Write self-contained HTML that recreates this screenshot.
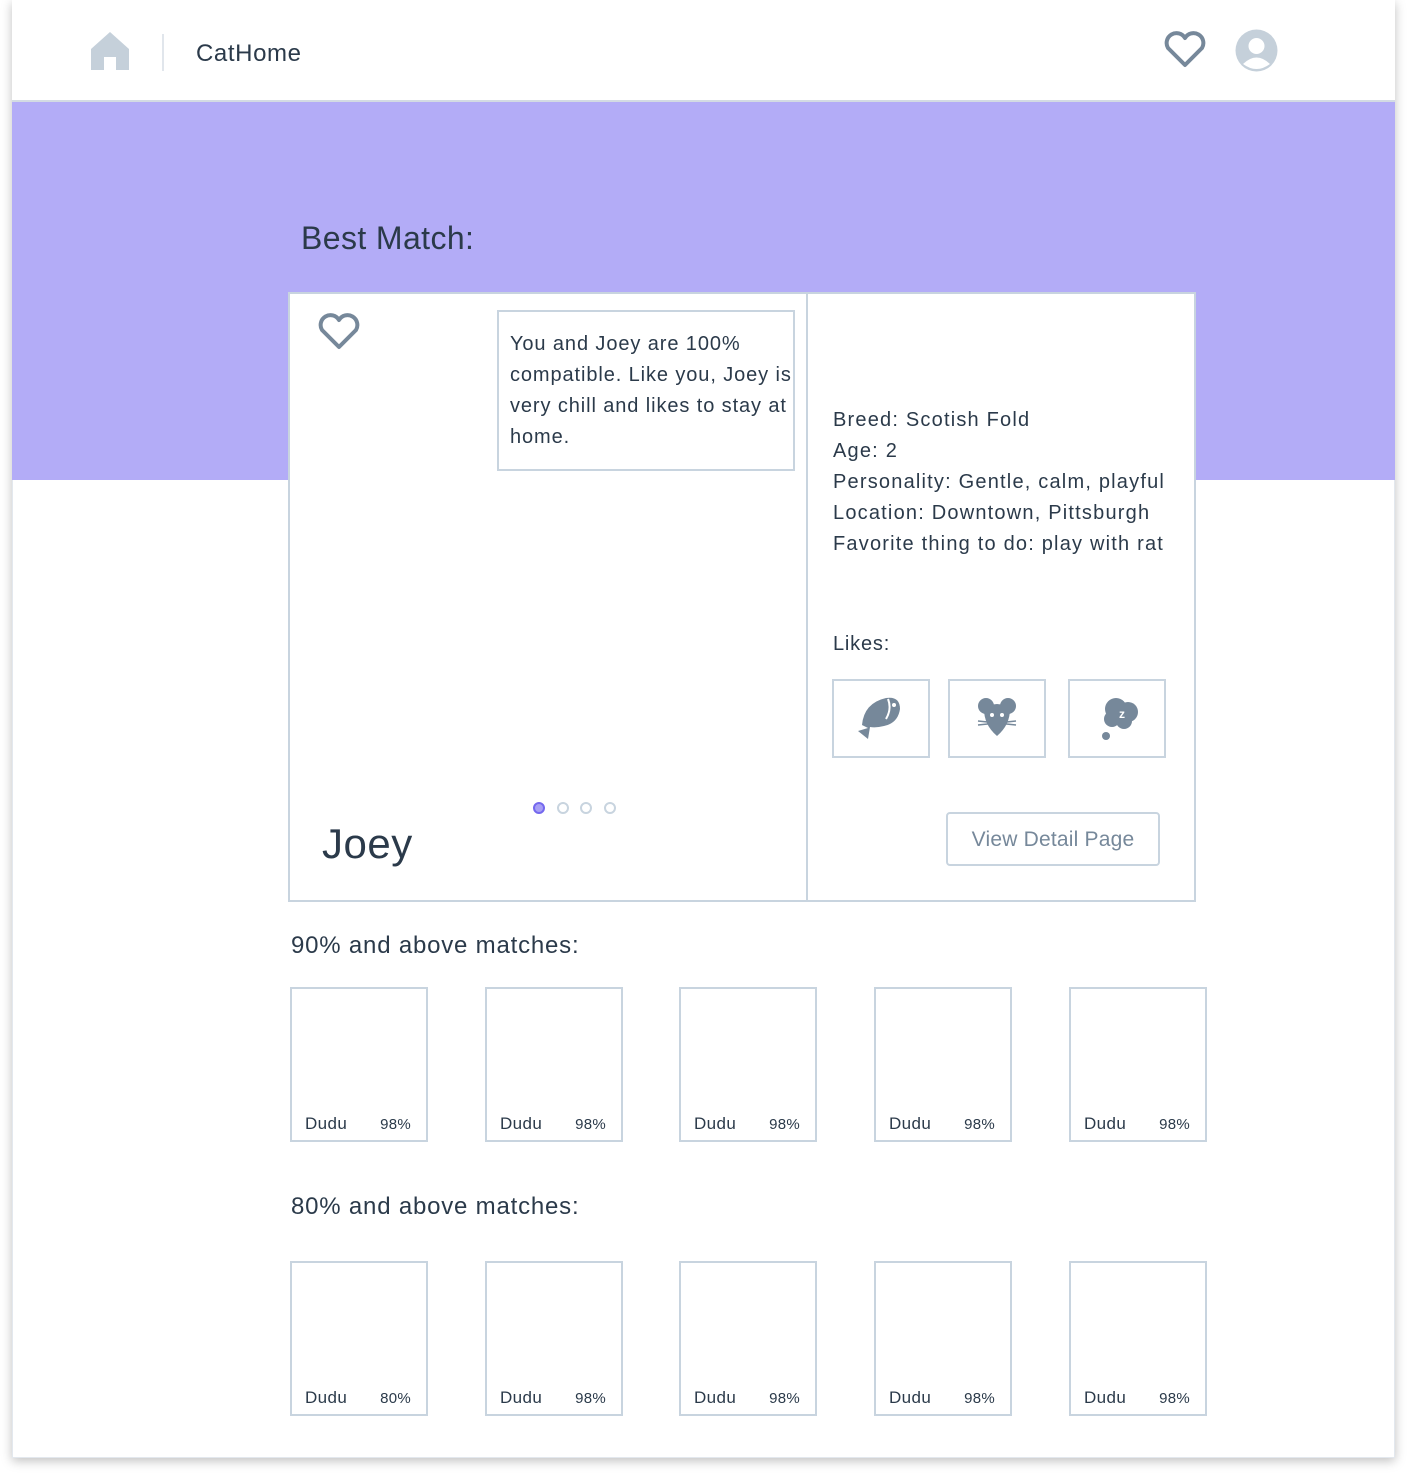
<!DOCTYPE html>
<html><head><meta charset="utf-8">
<style>
*{margin:0;padding:0;box-sizing:border-box}
body{width:1407px;height:1482px;background:#fff;font-family:"Liberation Sans",sans-serif;color:#2b3a4a;position:relative;overflow:hidden}
.frame{position:absolute;left:12px;top:0;width:1383px;height:1458px;background:#fff;box-shadow:0 3px 10px rgba(0,0,0,.25);border:1px solid #e3e8ee}
.abs{position:absolute;white-space:nowrap}
.band{position:absolute;left:12px;top:102px;width:1383px;height:378px;background:#b3acf7}
.hdr{position:absolute;left:12px;top:0;width:1383px;height:102px;background:#fff;border-bottom:2px solid #d3dbe3}
.box{position:absolute;border:2px solid #c8d4df;background:#fff}
.sm{position:absolute;width:138px;height:155px;border:2px solid #c8d4df;background:#fff}
.sm .n{position:absolute;left:13px;bottom:6px;font-size:17px;color:#2b3a4a;letter-spacing:0.4px}
.sm .p{position:absolute;right:15px;bottom:7px;font-size:15px;color:#2b3a4a;letter-spacing:0.3px}
.like{position:absolute;top:679px;width:98px;height:79px;border:2px solid #c8d4df;background:#fff}
.dot{position:absolute;top:802px;width:12px;height:12px;border-radius:50%;border:2px solid #c8d4df}
</style></head><body>
<div class="frame"></div>
<div class="band"></div>
<div class="hdr"></div>
<svg class="abs" style="left:90px;top:31px" width="40" height="40" viewBox="0 0 40 40"><path d="M20 1 L39 18 L39 39 L26 39 L26 26 L14 26 L14 39 L1 39 L1 18 Z" fill="#c5d0da"/></svg>
<div class="abs" style="left:162px;top:34px;width:2px;height:37px;background:#e1e6ec"></div>
<div class="abs" style="left:196px;top:40px;font-size:24px;color:#2b3a4a;letter-spacing:0.6px">CatHome</div>
<svg class="abs" style="left:1163px;top:31px" width="44" height="38" viewBox="0 0 44 38"><path d="M22 34 L5 17 A9.5 9.5 0 0 1 22 7 A9.5 9.5 0 0 1 39 17 Z" fill="none" stroke="#76889a" stroke-width="4" stroke-linejoin="round"/></svg>
<svg class="abs" style="left:1235px;top:29px" width="43" height="43" viewBox="0 0 43 43"><circle cx="21.5" cy="21.5" r="21" fill="#c5d0da"/><circle cx="21.5" cy="17" r="8" fill="#fff"/><path d="M8 35 Q21.5 22 35 35 Q21.5 45 8 35Z" fill="#fff"/></svg>
<div class="abs" style="left:301px;top:220px;font-size:32px;color:#2b3a4a;letter-spacing:0.4px">Best Match:</div>
<div class="box" style="left:288px;top:292px;width:908px;height:610px"></div>
<div class="abs" style="left:806px;top:294px;width:2px;height:606px;background:#c8d4df"></div>
<svg class="abs" style="left:317px;top:313px" width="44" height="38" viewBox="0 0 44 38"><path d="M22 34 L5 17 A9.5 9.5 0 0 1 22 7 A9.5 9.5 0 0 1 39 17 Z" fill="none" stroke="#76889a" stroke-width="4" stroke-linejoin="round"/></svg>
<div class="box" style="left:497px;top:310px;width:298px;height:161px"></div>
<div class="abs" style="left:510px;top:329px;font-size:20px;line-height:31px;color:#2b3a4a;letter-spacing:0.9px">You and Joey are 100%<br>compatible. Like you, Joey is<br>very chill and likes to stay at<br>home.</div>
<div class="dot" style="left:533px;background:#a79ff5;border-color:#7468ee"></div>
<div class="dot" style="left:557px"></div>
<div class="dot" style="left:580px"></div>
<div class="dot" style="left:604px"></div>
<div class="abs" style="left:322px;top:820px;font-size:42px;color:#2b3a4a;letter-spacing:0.5px">Joey</div>
<div class="abs" style="left:833px;top:405px;font-size:20px;line-height:31px;color:#2b3a4a;letter-spacing:1.2px">Breed: Scotish Fold<br>Age: 2<br>Personality: Gentle, calm, playful<br>Location: Downtown, Pittsburgh<br>Favorite thing to do: play with rat</div>
<div class="abs" style="left:833px;top:633px;font-size:20px;color:#2b3a4a;letter-spacing:0.8px">Likes:</div>
<div class="like" style="left:832px"><svg width="94" height="75" viewBox="0 0 94 75"><path d="M28 44 Q30 22 52 17 Q66 15 66 28 Q64 42 50 45 Q42 47 36 46 L34 58 L24 50 L34 47 Z" fill="#76889a"/><path d="M54 18 Q58 28 52 38" stroke="#fff" stroke-width="2" fill="none"/><circle cx="60" cy="24" r="2" fill="#fff"/></svg></div>
<div class="like" style="left:948px"><svg width="94" height="75" viewBox="0 0 94 75"><circle cx="36" cy="25" r="8" fill="#76889a"/><circle cx="58" cy="25" r="8" fill="#76889a"/><path d="M34 28 Q47 18 60 28 Q60 44 47 55 Q34 44 34 28Z" fill="#76889a"/><circle cx="42" cy="34" r="2" fill="#fff"/><circle cx="52" cy="34" r="2" fill="#fff"/><path d="M28 44 L66 40 M28 40 L66 44" stroke="#76889a" stroke-width="1.5"/></svg></div>
<div class="like" style="left:1068px"><svg width="94" height="75" viewBox="0 0 94 75"><circle cx="46" cy="28" r="11" fill="#76889a"/><circle cx="58" cy="31" r="10" fill="#76889a"/><circle cx="42" cy="38" r="8" fill="#76889a"/><circle cx="54" cy="40" r="8" fill="#76889a"/><circle cx="36" cy="55" r="4" fill="#76889a"/><text x="49" y="37" font-size="12" font-family="Liberation Sans" fill="#fff" font-weight="bold">z</text></svg></div>
<div class="abs" style="left:946px;top:812px;width:214px;height:54px;border:2px solid #c8d4df;border-radius:4px;font-size:21px;color:#76889a;text-align:center;line-height:52px;letter-spacing:0.2px">View Detail Page</div>
<div class="abs" style="left:291px;top:932px;font-size:24px;color:#2b3a4a;letter-spacing:0.8px">90% and above matches:</div>
<div class="abs" style="left:291px;top:1193px;font-size:24px;color:#2b3a4a;letter-spacing:0.8px">80% and above matches:</div>
<div class="sm" style="left:290px;top:987px"><span class="n">Dudu</span><span class="p">98%</span></div>
<div class="sm" style="left:485px;top:987px"><span class="n">Dudu</span><span class="p">98%</span></div>
<div class="sm" style="left:679px;top:987px"><span class="n">Dudu</span><span class="p">98%</span></div>
<div class="sm" style="left:874px;top:987px"><span class="n">Dudu</span><span class="p">98%</span></div>
<div class="sm" style="left:1069px;top:987px"><span class="n">Dudu</span><span class="p">98%</span></div>
<div class="sm" style="left:290px;top:1261px"><span class="n">Dudu</span><span class="p">80%</span></div>
<div class="sm" style="left:485px;top:1261px"><span class="n">Dudu</span><span class="p">98%</span></div>
<div class="sm" style="left:679px;top:1261px"><span class="n">Dudu</span><span class="p">98%</span></div>
<div class="sm" style="left:874px;top:1261px"><span class="n">Dudu</span><span class="p">98%</span></div>
<div class="sm" style="left:1069px;top:1261px"><span class="n">Dudu</span><span class="p">98%</span></div>
</body></html>
